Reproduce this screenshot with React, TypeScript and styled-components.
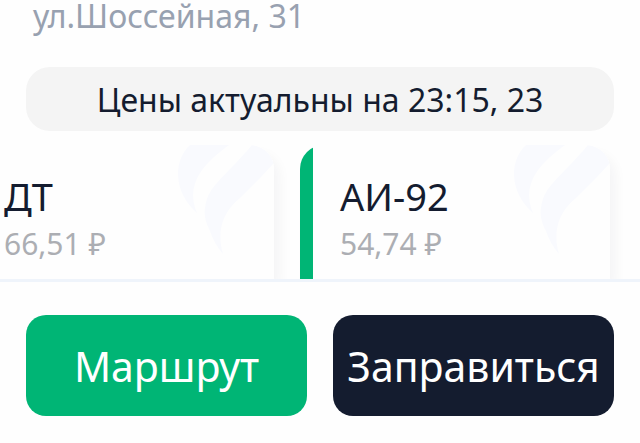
import React from 'react';
import styled, { createGlobalStyle } from 'styled-components';

interface Fuel {
  name: string;
  price: string;
}

const fuels: Fuel[] = [
  { name: 'ДТ', price: '66,51 ₽' },
  { name: 'АИ-92', price: '54,74 ₽' },
];

function Flame() {
  return (
    <FlameSvg viewBox="0 0 96 110" aria-hidden="true">
      <path d="M12 0H51C43 6 35 12 29 19C24 25 20 30 18 36C15 43 13 54 19 68C9 59 0 46 0 29C0 17 5 6 12 0Z" />
      <path d="M74 0C86 2 94 9 96 18L82 33C76 39 70 45 64 51C56 58 49 65 45 76C41 88 42 98 45 109C39 102 35 95 32 86C27 77 26 69 27 63C28 55 30 50 34 44C45 30 60 17 74 0Z" />
    </FlameSvg>
  );
}

export default function App() {
  return (
    <Screen>
      <GlobalStyle />
      <Station>
        <Address>ул.Шоссейная, 31</Address>
        <Notice>Цены актуальны на 23:15, 23</Notice>
        <FuelList>
          {fuels.map((fuel) => (
            <FuelCard key={fuel.name}>
              <Flame />
              <FuelName>{fuel.name}</FuelName>
              <FuelPrice>{fuel.price}</FuelPrice>
            </FuelCard>
          ))}
        </FuelList>
      </Station>
      <Actions>
        <ActionButton type="button" $color="#00b575">Маршрут</ActionButton>
        <ActionButton type="button" $color="#141c2f">Заправиться</ActionButton>
      </Actions>
    </Screen>
  );
}

const GlobalStyle = createGlobalStyle`
  *, *::before, *::after {
    box-sizing: border-box;
  }

  body {
    margin: 0;
    background: #fefefe;
    font-family: "Noto Sans", "Open Sans", sans-serif;
    color: #141c2f;
  }
`;

const Screen = styled.main`
  display: flex;
  flex-direction: column;
  min-height: 100vh;
  overflow-x: clip;
`;

const Station = styled.section`
  flex: 1;
`;

const Address = styled.p`
  margin: 0;
  padding: 0 33px;
  font-size: 32px;
  line-height: 32px;
  color: #98a1b0;
`;

const Notice = styled.p`
  margin: 35px 26px 14px;
  padding: 13px 24px 11px;
  border-radius: 24px;
  background: #f4f4f4;
  font-size: 32px;
  line-height: 40px;
  text-align: center;
`;

/* the row is scrolled part of the way, so the first card is cut by the left edge */
const FuelList = styled.ul`
  display: flex;
  gap: 26px;
  margin: 0 0 0 -36px;
  padding: 0;
  list-style: none;
`;

const FuelCard = styled.li`
  position: relative;
  flex: 0 0 310px;
  padding: 29px 27px 15px 40px;
  border-radius: 24px 24px 0 0;
  overflow: hidden;
  background: linear-gradient(to right, #00b575 13px, #fefefe 13px);
  box-shadow: 6px 8px 12px rgba(20, 28, 47, 0.04);
`;

const FlameSvg = styled.svg`
  position: absolute;
  top: 0;
  right: 0;
  width: 96px;
  height: 110px;
  fill: #f9fafe;
`;

const FuelName = styled.h2`
  position: relative;
  margin: 0;
  font-size: 38px;
  font-weight: 400;
  line-height: 44px;
`;

const FuelPrice = styled.p`
  position: relative;
  margin: 6px 0 0;
  font-size: 30px;
  line-height: 40px;
  color: #acaeb3;
`;

const Actions = styled.footer`
  position: relative;
  display: flex;
  gap: 26px;
  padding: 33px 26px 27px;
  border-top: 3px solid #eff4fb;
  background: #fefefe;
`;

const ActionButton = styled.button<{ $color: string }>`
  flex: 1 1 0;
  min-width: 0;
  padding: 25px 8px 23px;
  border: 0;
  border-radius: 20px;
  background: ${({ $color }) => $color};
  color: #fff;
  font-family: inherit;
  font-size: 41px;
  line-height: 53px;
  text-align: center;
  white-space: nowrap;
  cursor: pointer;
`;
